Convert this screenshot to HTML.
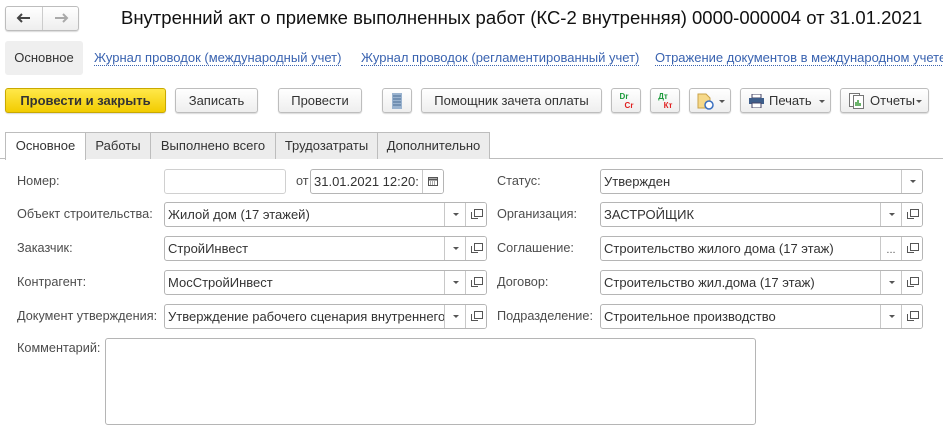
<!DOCTYPE html>
<html><head><meta charset="utf-8"><style>
*{box-sizing:border-box;margin:0;padding:0}
body{width:943px;height:432px;background:#fff;font-family:"Liberation Sans",Arial,sans-serif;font-size:13px;color:#333;position:relative;overflow:hidden}
.a{position:absolute}
.btn{position:absolute;height:25px;border:1px solid #bdbdbd;border-radius:3px;background:linear-gradient(#fff,#eee);box-shadow:0 1px 1px rgba(0,0,0,.15);text-align:center;line-height:23px;color:#333;font-size:13px}
.lnk{position:absolute;top:51px;color:#3a63b0;border-bottom:1px dotted #3a63b0;line-height:14px;font-size:13px;white-space:nowrap}
.tab{position:absolute;top:132px;height:27px;border:1px solid #bdbdbd;border-bottom:none;background:#ececec;line-height:25px;text-align:center;font-size:13px;color:#333}
.lbl{position:absolute;color:#4d4d4d;font-size:12.7px}
.fld{position:absolute;height:25px;border:1px solid #b5b5b5;border-radius:3px;background:#fff;line-height:23px;padding-left:3px;color:#333;font-size:13px;overflow:hidden;white-space:nowrap}
.sep{position:absolute;top:0;bottom:0;width:21px;border-left:1px solid #c8c8c8;background:#fff}
.dd::after{content:"";position:absolute;left:8px;top:10px;border-left:3px solid transparent;border-right:3px solid transparent;border-top:3px solid #555}
.op::before{content:"";position:absolute;left:5px;top:9px;width:6px;height:6px;border:1px solid #555;border-top:none;border-right:none}
.op::after{content:"";position:absolute;left:8px;top:6px;width:7px;height:6px;border:1px solid #555;background:#fff}
.car{position:absolute;left:0;top:0;border-left:3px solid transparent;border-right:3px solid transparent;border-top:3px solid #555}
</style></head><body>
<div class="btn" style="left:5px;top:6px;width:74px;height:25px"></div>
<div class="a" style="left:42px;top:7px;width:1px;height:23px;background:#ccc"></div>
<svg class="a" style="left:16px;top:12px" width="16" height="12"><path d="M2 6H14M6 2L2 6L6 10" stroke="#444" stroke-width="2" fill="none"/></svg>
<svg class="a" style="left:53px;top:12px" width="16" height="12"><path d="M2 6H14M10 2L14 6L10 10" stroke="#aaa" stroke-width="2" fill="none"/></svg>
<div class="a" style="left:121px;top:7px;font-size:18.5px;color:#111;white-space:nowrap">Внутренний акт о приемке выполненных работ (КС-2 внутренняя) 0000-000004 от 31.01.2021</div>

<div class="a" style="left:5px;top:41px;width:78px;height:34px;background:#efefef;border-radius:3px;line-height:34px;text-align:center;color:#333">Основное</div>
<div class="lnk" style="left:94px">Журнал проводок (международный учет)</div>
<div class="lnk" style="left:361px">Журнал проводок (регламентированный учет)</div>
<div class="lnk" style="left:655px">Отражение документов в международном учете</div>

<div class="btn" style="left:5px;top:88px;width:161px;background:linear-gradient(#ffe84a,#f2cc00);border-color:#c9a900;font-weight:bold;color:#333">Провести и закрыть</div>
<div class="btn" style="left:175px;top:88px;width:83px">Записать</div>
<div class="btn" style="left:278px;top:88px;width:84px">Провести</div>
<div class="btn" style="left:382px;top:88px;width:30px"><svg width="12" height="16" style="margin-top:4px"><rect x="1" y="0" width="10" height="16" fill="#9ab3cf"/><path d="M2 3H10M2 6H10M2 9H10M2 12H10" stroke="#4b6e96"/></svg></div>
<div class="btn" style="left:421px;top:88px;width:181px">Помощник зачета оплаты</div>
<div class="btn" style="left:611px;top:88px;width:30px;font-size:8px;line-height:9px;font-weight:bold"><div style="margin-top:3px;margin-left:-4px;color:#1a9a3a">Dr</div><div style="margin-left:6px;color:#e02020">Cr</div></div>
<div class="btn" style="left:650px;top:88px;width:30px;font-size:8px;line-height:9px;font-weight:bold"><div style="margin-top:3px;margin-left:-4px;color:#1a9a3a">Дт</div><div style="margin-left:6px;color:#e02020">Кт</div></div>
<div class="btn" style="left:689px;top:88px;width:42px"><svg class="a" style="left:7px;top:4px" width="18" height="17"><path d="M1 1H9L13 5V15H1Z" fill="#f6d98a" stroke="#c9a24a"/><circle cx="12" cy="12" r="4" fill="#fff" stroke="#3a6fc0" stroke-width="1.5"/></svg><span class="car" style="left:29px;top:11px"></span></div>
<div class="btn" style="left:740px;top:88px;width:91px;text-align:left;padding-left:28px"><svg class="a" style="left:8px;top:5px" width="15" height="14"><rect x="3" y="0" width="9" height="4" fill="#fff" stroke="#446"/><rect x="0" y="4" width="15" height="6" fill="#3d5d8a"/><rect x="3" y="9" width="9" height="5" fill="#fff" stroke="#446"/></svg>Печать<span class="car" style="left:78px;top:11px"></span></div>
<div class="btn" style="left:840px;top:88px;width:89px;text-align:left;padding-left:29px"><svg class="a" style="left:8px;top:4px" width="16" height="16"><rect x="0.5" y="0.5" width="10" height="13" fill="#fff" stroke="#777"/><rect x="4.5" y="2.5" width="10" height="13" fill="#fff" stroke="#777"/><path d="M7 13V9M9 13V7M11 13V10" stroke="#3a9a3a" stroke-width="1.5"/></svg>Отчеты<span class="car" style="left:75px;top:11px"></span></div>

<div class="a" style="left:0;top:158px;width:943px;height:1px;background:#bdbdbd"></div>
<div class="tab" style="left:5px;width:81px;background:#fff;height:28px">Основное</div>
<div class="tab" style="left:85px;width:66px">Работы</div>
<div class="tab" style="left:150px;width:126px">Выполнено всего</div>
<div class="tab" style="left:275px;width:103px">Трудозатраты</div>
<div class="tab" style="left:377px;width:113px">Дополнительно</div>

<div class="lbl" style="left:17px;top:174px">Номер:</div>
<div class="fld" style="left:164px;top:169px;width:122px;border-color:#d0d0d0"></div>
<div class="lbl" style="left:296px;top:174px">от</div>
<div class="fld" style="left:310px;top:169px;width:134px">31.01.2021 12:20:<div class="sep" style="left:111px"><svg style="position:absolute;left:5px;top:6px" width="10" height="10"><rect x="0.5" y="1.5" width="9" height="8" fill="none" stroke="#555"/><path d="M0 3.5H10" stroke="#555" stroke-width="2"/><path d="M2 6H8M2 8H8" stroke="#555" stroke-dasharray="1 1"/></svg></div></div>

<div class="lbl" style="left:17px;top:207px">Объект строительства:</div>
<div class="fld" style="left:164px;top:202px;width:323px">Жилой дом (17 этажей)<div class="sep dd" style="left:279px"></div><div class="sep op" style="left:300px"></div></div>
<div class="lbl" style="left:17px;top:241px">Заказчик:</div>
<div class="fld" style="left:164px;top:236px;width:323px">СтройИнвест<div class="sep dd" style="left:279px"></div><div class="sep op" style="left:300px"></div></div>
<div class="lbl" style="left:17px;top:275px">Контрагент:</div>
<div class="fld" style="left:164px;top:270px;width:323px">МосСтройИнвест<div class="sep dd" style="left:279px"></div><div class="sep op" style="left:300px"></div></div>
<div class="lbl" style="left:17px;top:309px">Документ утверждения:</div>
<div class="fld" style="left:164px;top:304px;width:323px">Утверждение рабочего сценария внутреннего<div class="sep dd" style="left:279px"></div><div class="sep op" style="left:300px"></div></div>

<div class="lbl" style="left:497px;top:174px">Статус:</div>
<div class="fld" style="left:600px;top:169px;width:323px">Утвержден<div class="sep dd" style="left:300px"></div></div>
<div class="lbl" style="left:497px;top:207px">Организация:</div>
<div class="fld" style="left:600px;top:202px;width:323px">ЗАСТРОЙЩИК<div class="sep dd" style="left:279px"></div><div class="sep op" style="left:300px"></div></div>
<div class="lbl" style="left:497px;top:241px">Соглашение:</div>
<div class="fld" style="left:600px;top:236px;width:323px">Строительство жилого дома (17 этаж)<div class="sep" style="left:279px;font-size:11px;line-height:26px;text-align:center;padding:0;color:#555">...</div><div class="sep op" style="left:300px"></div></div>
<div class="lbl" style="left:497px;top:275px">Договор:</div>
<div class="fld" style="left:600px;top:270px;width:323px">Строительство жил.дома (17 этаж)<div class="sep dd" style="left:279px"></div><div class="sep op" style="left:300px"></div></div>
<div class="lbl" style="left:497px;top:309px">Подразделение:</div>
<div class="fld" style="left:600px;top:304px;width:323px">Строительное производство<div class="sep dd" style="left:279px"></div><div class="sep op" style="left:300px"></div></div>

<div class="lbl" style="left:17px;top:341px">Комментарий:</div>
<div class="fld" style="left:105px;top:338px;width:651px;height:87px"></div>
</body></html>
